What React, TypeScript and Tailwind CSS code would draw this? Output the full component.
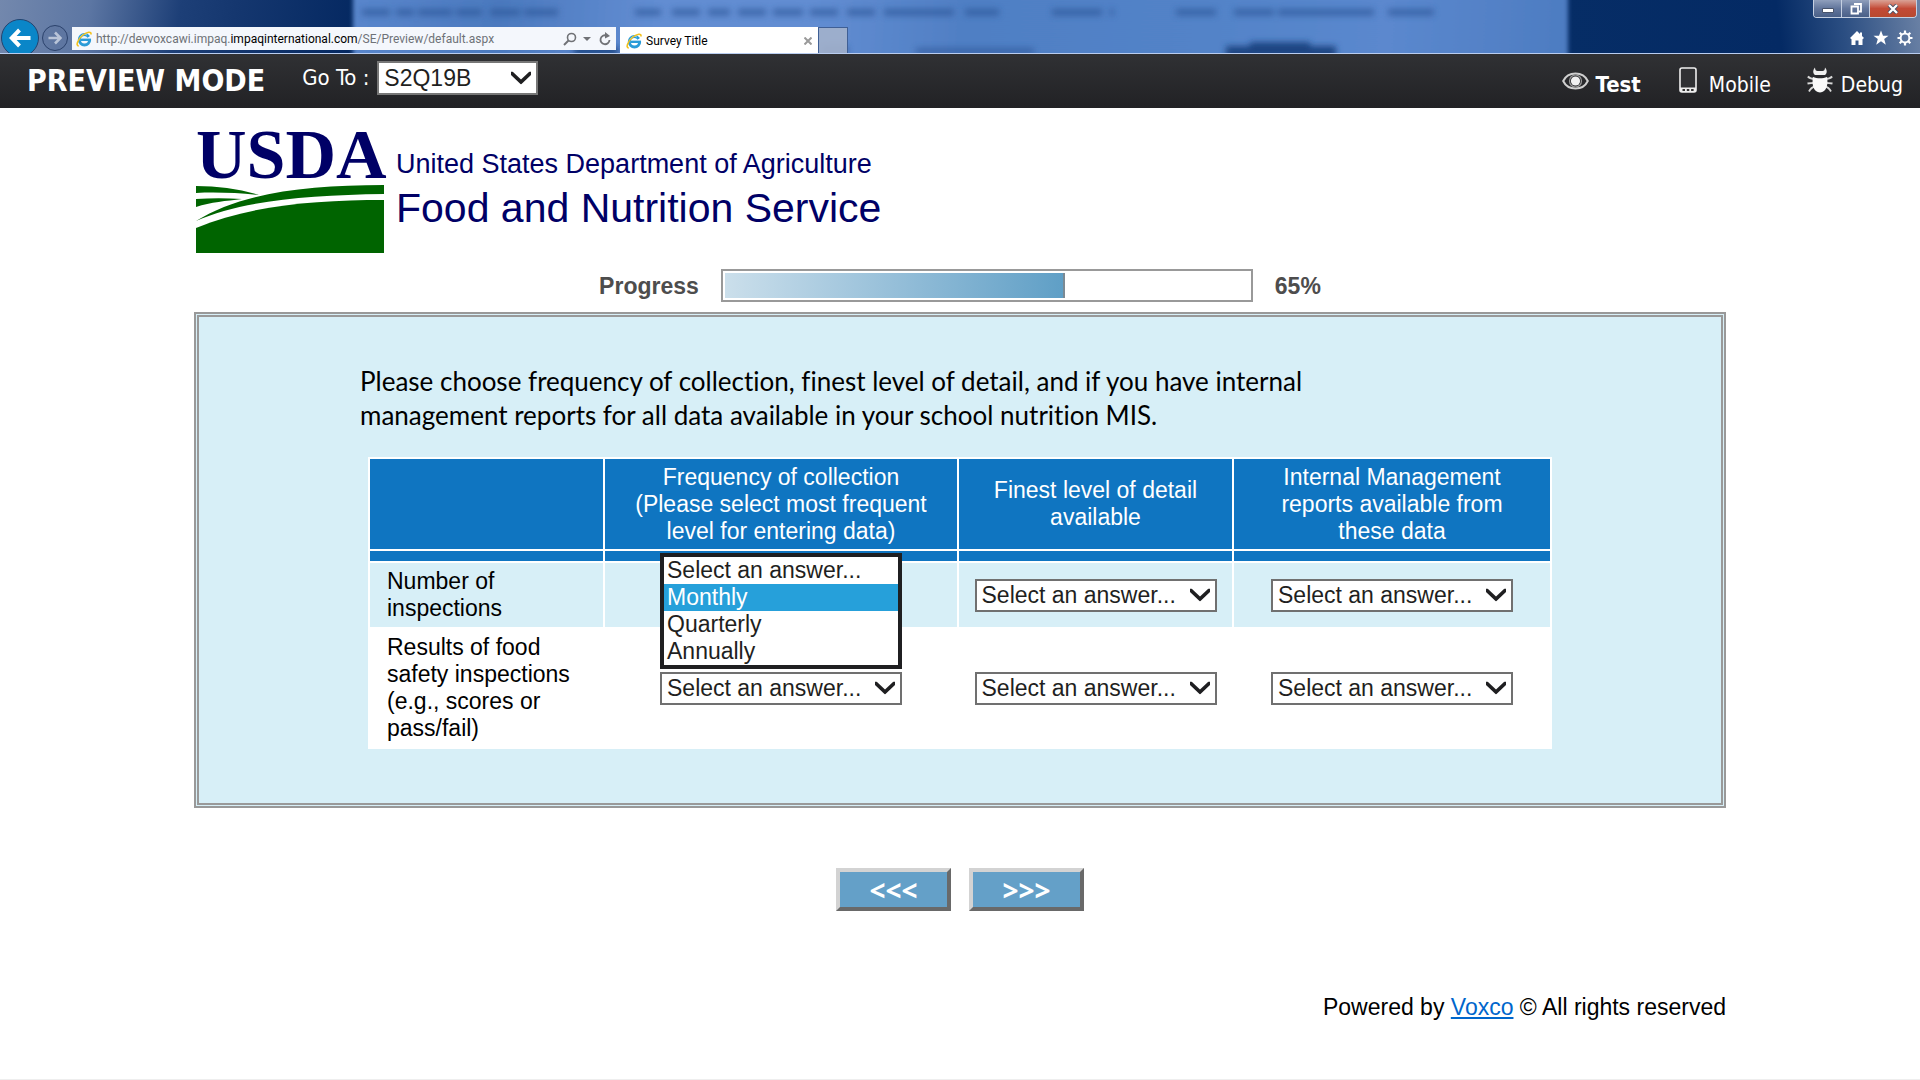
import React from "react";

const SANS = "font-['Liberation_Sans',sans-serif]";
const TAHOMA = "font-['DejaVu_Sans_Condensed','Noto_Sans',sans-serif]";
const CHROME = "font-['Roboto',sans-serif]";

const columns = [
  { id: "frequency", label: "Frequency of collection (Please select most frequent level for entering data)" },
  { id: "detail", label: "Finest level of detail available" },
  { id: "reports", label: "Internal Management reports available from these data" },
];

const rows = [
  { id: "inspections", label: "Number of inspections", open: "frequency" },
  { id: "results", label: "Results of food safety inspections (e.g., scores or pass/fail)", open: null },
];

const answers = ["Select an answer...", "Monthly", "Quarterly", "Annually"];

function IeLogo() {
  return (
    <svg viewBox="0 0 16 16" className="w-4 h-4 shrink-0" aria-hidden="true">
      <circle cx="8.500" cy="8.800" r="5.200" fill="none" stroke="#2a9bd8" strokeWidth="3" strokeDasharray="28.700 4" />
      <path d="M4.500 8.800H15" stroke="#2a9bd8" strokeWidth="2.400" />
      <path d="M4 6.500a5 5 0 0 1 7-2.500" fill="none" stroke="#8fd3f2" strokeWidth="1" />
      <path d="M2.800 15C-.8 14.800 2 8 7 4c4-3.200 8.500-4 8-.5" fill="none" stroke="#f3c11b" strokeWidth="1.600" />
    </svg>
  );
}

function Chevron() {
  return (
    <svg
      viewBox="0 0 20 13"
      className="absolute right-[7px] top-1/2 -translate-y-1/2 w-5 h-[13px] pointer-events-none"
      aria-hidden="true"
    >
      <path d="M0 0h1.500L10 8 18.500 0H20v3.500L10 13 0 3.500z" fill="#1f1f21" />
    </svg>
  );
}

// blurred window contents that show through the glass frame
const ghostText = [
  [362, 28], [396, 18], [418, 34], [456, 26], [490, 30], [524, 34],
  [635, 26], [672, 28], [708, 22], [738, 28], [773, 30], [810, 28], [847, 28], [884, 70], [965, 34],
  [1052, 50], [1110, 4], [1176, 40], [1234, 40], [1278, 96], [1388, 46],
];

function GlassBackdrop() {
  return (
    <svg
      className="absolute inset-0 w-full h-full"
      viewBox="0 0 1920 54"
      preserveAspectRatio="none"
      aria-hidden="true"
    >
      <defs>
        <linearGradient id="glassLeft" gradientUnits="userSpaceOnUse" x1="0" y1="0" x2="354" y2="60">
          <stop offset="0" stopColor="#7388ad" />
          <stop offset="0.25" stopColor="#5c76a3" />
          <stop offset="0.5" stopColor="#1d3f77" />
          <stop offset="0.65" stopColor="#15376f" />
          <stop offset="1" stopColor="#042861" />
        </linearGradient>
        <linearGradient id="glassMid" gradientUnits="userSpaceOnUse" x1="353" y1="0" x2="1568" y2="60">
          <stop offset="0" stopColor="#5986cc" />
          <stop offset="0.12" stopColor="#4b79be" />
          <stop offset="0.25" stopColor="#628dd2" />
          <stop offset="0.38" stopColor="#628dd2" />
          <stop offset="0.5" stopColor="#507fc4" />
          <stop offset="0.7" stopColor="#5283c8" />
          <stop offset="0.85" stopColor="#5b88ce" />
          <stop offset="1" stopColor="#4d7cc1" />
        </linearGradient>
        <linearGradient id="glassRight" gradientUnits="userSpaceOnUse" x1="1568" y1="54" x2="1920" y2="10">
          <stop offset="0" stopColor="#062d66" />
          <stop offset="0.6" stopColor="#042a64" />
          <stop offset="0.78" stopColor="#2b4e82" />
          <stop offset="1" stopColor="#6a81a5" />
        </linearGradient>
        <filter id="soft" x="-20%" y="-100%" width="140%" height="300%">
          <feGaussianBlur stdDeviation="3" />
        </filter>
        <filter id="edge">
          <feGaussianBlur stdDeviation="2 0" />
        </filter>
      </defs>
      <rect width="960" height="54" fill="url(#glassLeft)" />
      <rect x="1560" width="360" height="54" fill="url(#glassRight)" />
      <rect x="353" y="-10" width="1215" height="74" fill="url(#glassMid)" filter="url(#edge)" />
      <g filter="url(#soft)" fill="#2c5596" opacity="0.65">
        {ghostText.map(([x, w]) => (
          <rect key={x} x={x} y="9" width={w} height="7" />
        ))}
        <rect x="822" y="47" width="26" height="8" />
        <rect x="916" y="49" width="118" height="6" />
      </g>
      <g filter="url(#soft)" fill="#1a4482">
        <rect x="574" y="48" width="44" height="8" />
        <rect x="1226" y="47" width="110" height="12" />
        <rect x="1250" y="43" width="60" height="6" />
      </g>
    </svg>
  );
}

function BrowserChrome() {
  return (
    <header className={`relative h-[54px] border-b border-[#b9cdf0] overflow-hidden ${CHROME}`}>
      <GlassBackdrop />
      <div className="relative flex h-full items-start">
        <div className="flex h-full items-start pt-[19px] pl-px">
          <button
            aria-label="Back"
            className="w-[38px] h-[38px] shrink-0 rounded-full bg-[#0a86c8] border border-[#24436f] flex items-center justify-center"
          >
            <svg viewBox="0 0 22 20" className="w-[22px] h-5" aria-hidden="true">
              <path d="M10.500 2 2.800 10l7.700 8M3 10h18.500" fill="none" stroke="#fff" strokeWidth="4" />
            </svg>
          </button>
          <button
            aria-label="Forward"
            className="mt-1.5 ml-[3px] w-[26px] h-[26px] shrink-0 rounded-full bg-[#5a719b]/40 border border-[#2b426c] flex items-center justify-center"
          >
            <svg viewBox="0 0 14 14" className="w-3.5 h-3.5" aria-hidden="true">
              <path d="M7 1.500 12.500 7 7 12.500M12 7H.5" fill="none" stroke="#b9c4d8" strokeWidth="2.600" />
            </svg>
          </button>
        </div>

        <div className="mt-[27px] ml-1 w-[544px] h-[23px] bg-[#f4f7fc] flex items-center pl-1 pr-[5px]">
          <IeLogo />
          <div role="textbox" aria-label="Address" className="ml-1 flex-1 text-xs text-[#6e7277] whitespace-nowrap">
            http://devvoxcawi.impaq.<span className="text-black">impaqinternational.com</span>
            /SE/Preview/default.aspx
          </div>
          <button aria-label="Search">
            <svg viewBox="0 0 14 14" className="w-3.5 h-3.5" aria-hidden="true">
              <path d="M5.500 8.500 1 13" stroke="#707276" strokeWidth="2" />
              <circle cx="8.500" cy="5.500" r="4" fill="none" stroke="#707276" strokeWidth="1.600" />
            </svg>
          </button>
          <svg viewBox="0 0 8 4" className="ml-1.5 w-2 h-1" aria-hidden="true">
            <path d="M0 0h8L4 4z" fill="#707276" />
          </svg>
          <button aria-label="Refresh" className="ml-2">
            <svg viewBox="0 0 12 14" className="w-3 h-3.5" aria-hidden="true">
              <path d="M10.500 8a4.500 4.500 0 1 1-3-4.500" fill="none" stroke="#707276" strokeWidth="1.800" />
              <path d="M6 0v6.500L11 4z" fill="#707276" />
            </svg>
          </button>
        </div>

        <div className="mt-[27px] ml-1 w-[199px] h-[27px] bg-white border-r border-[#3f5f95] flex items-center pl-1.5 pr-1.5">
          <IeLogo />
          <span className="ml-1 flex-1 text-xs text-black">Survey Title</span>
          <button aria-label="Close tab">
            <svg viewBox="0 0 8 8" className="w-2 h-2" aria-hidden="true">
              <path d="m.5.5 7 7m0-7-7 7" stroke="#9a9a9a" strokeWidth="2" />
            </svg>
          </button>
        </div>
        <button
          aria-label="New tab"
          className="mt-[27px] w-[29px] h-[27px] bg-[#a3b1cb]/90 border-r border-t border-[#3f5f95]"
        />

        <div className="ml-auto flex flex-col items-end pr-[3px]">
          <div className="flex w-[104px] h-[18px] rounded-b-[4px] border border-t-0 border-[#c5d0e2] overflow-hidden">
            <button
              aria-label="Minimize"
              className="w-7 flex items-center justify-center bg-linear-to-b from-[#8f9fbc] via-[#62769c] to-[#4a6088] border-r border-[#c5d0e2]"
            >
              <svg viewBox="0 0 12 5" className="w-3 h-[5px] mt-1" aria-hidden="true">
                <path d="M.5.5h11v4H.5z" fill="#fff" stroke="#47536b" />
              </svg>
            </button>
            <button
              aria-label="Restore"
              className="w-7 flex items-center justify-center bg-linear-to-b from-[#8f9fbc] via-[#62769c] to-[#4a6088] border-r border-[#c5d0e2]"
            >
              <svg viewBox="0 0 12 12" className="w-3 h-3" aria-hidden="true">
                <path d="M4 1h7v7.500H9M1.500 3.500h6.500v7H1.500z" fill="none" stroke="#fff" strokeWidth="1.800" />
              </svg>
            </button>
            <button
              aria-label="Close"
              className="flex-1 flex items-center justify-center bg-linear-to-b from-[#d9a296] via-[#c34a36] to-[#b8492f]"
            >
              <svg viewBox="0 0 12 10" className="w-3 h-2.5" aria-hidden="true">
                <path d="m2 1 8 8m0-8L2 9" stroke="#444f66" strokeWidth="4" />
                <path d="m2 1 8 8m0-8L2 9" stroke="#fff" strokeWidth="2.400" />
              </svg>
            </button>
          </div>
          <div className="flex gap-2 mt-3 pr-1 text-white">
            <button aria-label="Home">
              <svg viewBox="0 0 16 16" className="w-4 h-4" aria-hidden="true">
                <path d="M8 1 1 8l1.500 1.300V15h4v-4.500h3V15h4V9.300L15 8l-2-2V2.500h-2V4z" fill="#fff" />
              </svg>
            </button>
            <button aria-label="Favorites">
              <svg viewBox="0 0 16 16" className="w-4 h-4" aria-hidden="true">
                <path d="m8 .5 2 5.300h5.500L11.200 9l1.600 5.700L8 11.300l-4.800 3.400L4.800 9 .5 5.800H6z" fill="#fff" />
              </svg>
            </button>
            <button aria-label="Tools">
              <svg viewBox="0 0 16 16" className="w-4 h-4" aria-hidden="true">
                <circle cx="8" cy="8" r="4.400" fill="none" stroke="#fff" strokeWidth="2" />
                <path
                  d="M8 .5v3M8 12.500v3M.5 8h3M12.500 8h3M2.700 2.700l2 2M11.300 11.300l2 2M13.300 2.700l-2 2M4.700 11.300l-2 2"
                  stroke="#fff"
                  strokeWidth="2.200"
                />
              </svg>
            </button>
          </div>
        </div>
      </div>
    </header>
  );
}

function PreviewBar() {
  return (
    <div className={`h-[54px] flex items-center bg-linear-to-b from-[#303134] to-[#222225] text-white pl-[27px] pr-[17px] ${TAHOMA}`}>
      <h1 className="text-[30px] leading-[54px] font-bold whitespace-nowrap">PREVIEW MODE</h1>
      <label htmlFor="goto" className="ml-[37px] mb-1.5 text-[22px] leading-8 whitespace-nowrap">Go To :</label>
      <div className={`relative ml-2 mb-1.5 ${SANS}`}>
        <select
          id="goto"
          className="appearance-none block w-[161px] h-[34px] bg-white border-2 border-[#777] pl-[5px] text-[23px] leading-7 text-[#1f1f21]"
        >
          <option>S2Q19B</option>
        </select>
        <Chevron />
      </div>

      <nav className="ml-auto flex items-center text-[21px] leading-8">
        <a href="#test" className="flex items-center text-[22px] font-bold">
          <svg viewBox="0 0 27 18" className="w-[27px] h-[18px] mr-[7px]" aria-hidden="true">
            <path d="M1.200 9C6-1 21-1 25.800 9 21 19 6 19 1.200 9z" fill="none" stroke="#cfcfcf" strokeWidth="2" />
            <circle cx="13.500" cy="9" r="6" fill="none" stroke="#9a9a9a" strokeWidth="1.200" />
            <circle cx="13.500" cy="9" r="4.600" fill="#f0f0f0" />
          </svg>
          <span className="pt-2">Test</span>
        </a>
        <a href="#mobile" className="flex items-center ml-[38px]">
          <svg viewBox="0 0 18 26" className="w-[18px] h-[26px] mr-3 mb-0.5" aria-hidden="true">
            <rect x="1" y="1" width="16" height="24" rx="2" fill="#303134" stroke="#eee" strokeWidth="1.600" />
            <path d="M1 20.500h16V25H1z" fill="#eee" />
            <path d="M3.500 23h2.500m1.800 0h2.500m1.800 0h2.500" stroke="#333" strokeWidth="2" />
          </svg>
          <span className="pt-2">Mobile</span>
        </a>
        <a href="#debug" className="flex items-center ml-9">
          <svg viewBox="0 0 26 26" className="w-[26px] h-[26px] mr-2 mb-0.5" aria-hidden="true">
            <g fill="none" stroke="#d8d8d8" strokeWidth="1.800">
              <path d="M.8 9.500c2 2 4 2.500 7 2.500M.5 16.500c3-.6 5-.7 7-.7M2 24.500c1.500-3 3.500-4.500 6-5" />
              <path d="M25.200 9.500c-2 2-4 2.500-7 2.500M25.500 16.500c-3-.6-5-.7-7-.7M24 24.500c-1.500-3-3.500-4.500-6-5" />
            </g>
            <path d="M8 .5c-3 3.500-1.500 6.500 0 7.500h10c1.500-1 3-4 0-7.500 0 2.500-1 3.500-2.500 3.500h-5C9 4 8 3 8 .5z" fill="#f0f0f0" />
            <path d="M6 10c4 1.800 10 1.800 14 0 1.500 7-.5 15.500-7 15.500S4.500 17 6 10z" fill="#fafafa" />
          </svg>
          <span className="pt-2">Debug</span>
        </a>
      </nav>
    </div>
  );
}

function UsdaLogo() {
  return (
    <div className="flex pt-3 pl-0.5 text-[#000066]">
      <div className="w-[188px]">
        <div className="h-[65px] font-['Liberation_Serif',serif] font-bold text-[70px] leading-[69px]">USDA</div>
        <svg viewBox="0 0 188 68" className="block w-[188px] h-[68px]" aria-hidden="true">
          <path d="M0 1c22 0 44 3 63 9-20-2-42-3-63-2z" fill="#006400" />
          <path d="M0 14c15-1 30-1 46 0-16 2-31 3-46 8z" fill="#006400" />
          <path d="M0 36C45 8 110 0 188 0v9C110 10 45 16 0 36z" fill="#006400" />
          <path d="M0 43C55 20 120 15 188 15v53H0z" fill="#006400" />
        </svg>
      </div>
      <div className={`ml-3 mt-6 ${SANS}`}>
        <p className="text-[27px] leading-10">United States Department of Agriculture</p>
        <p className="text-[41px] leading-[48px]">Food and Nutrition Service</p>
      </div>
    </div>
  );
}

function Progress({ percent }: { percent: number }) {
  return (
    <div className="mt-4 flex items-center justify-center text-[23px] leading-8 font-bold text-[#4d4d4d]">
      <span id="progress-label">Progress</span>
      <div
        role="progressbar"
        aria-labelledby="progress-label"
        aria-valuenow={percent}
        className="mx-[22px] w-[532px] h-[33px] border-2 border-[#999] p-0.5 bg-white"
      >
        <div
          className="h-full bg-linear-to-r from-[#cbdfeb] to-[#5f9fc6] border-r-2 border-[#7b8a94]"
          style={{ width: `${percent}%` }}
        />
      </div>
      <span>{percent}%</span>
    </div>
  );
}

function AnswerSelect({ id, label, open }: { id: string; label: string; open: boolean }) {
  return (
    <div className="relative w-[242px] mx-auto text-left text-[#1f1f21]">
      <select
        id={id}
        aria-label={label}
        className="appearance-none block w-full h-[33px] bg-white border-2 border-[#707070] pl-[5px] text-[23px] leading-7"
      >
        {answers.map((a) => (
          <option key={a}>{a}</option>
        ))}
      </select>
      <Chevron />
      {open && (
        <ul role="listbox" className="absolute z-10 left-0 -top-[26px] w-full border-4 border-[#1f1f21] bg-white">
          {answers.map((a) => (
            <li
              key={a}
              role="option"
              aria-selected={a === "Monthly"}
              className={`pl-[3px] leading-[27px] ${a === "Monthly" ? "bg-[#26a0da] text-white" : ""}`}
            >
              {a}
            </li>
          ))}
        </ul>
      )}
    </div>
  );
}

function SurveyTable() {
  return (
    <table className="mt-[25px] ml-2 w-[1184px] table-fixed border-separate border-spacing-0.5 bg-white text-[23px] leading-[27px]">
      <colgroup>
        <col className="w-[233px]" />
        <col className="w-[352px]" />
        <col className="w-[273px]" />
        <col />
      </colgroup>
      <thead>
        <tr className="bg-[#0f75c1] text-white">
          <td className="h-[90px]" />
          {columns.map((c) => (
            <th key={c.id} scope="col" className="h-[90px] px-6 py-1 font-normal">{c.label}</th>
          ))}
        </tr>
        <tr className="bg-[#0f75c1]" aria-hidden="true">
          <td className="h-2.5" />
          <td />
          <td />
          <td />
        </tr>
      </thead>
      <tbody>
        {rows.map((r, i) => (
          <tr key={r.id} className={i % 2 === 0 ? "bg-[#d7eff7]" : "bg-white"}>
            <th scope="row" className="pl-[17px] pr-6 py-[5px] text-left font-normal">{r.label}</th>
            {columns.map((c) => (
              <td key={c.id}>
                <AnswerSelect id={`${r.id}-${c.id}`} label={`${r.label}: ${c.label}`} open={r.open === c.id} />
              </td>
            ))}
          </tr>
        ))}
      </tbody>
    </table>
  );
}

export default function App() {
  return (
    <div className={`min-h-screen flex flex-col bg-white text-black border-b border-[#eee] ${SANS}`}>
      <BrowserChrome />
      <PreviewBar />

      <main className="w-full max-w-[1532px] mx-auto">
        <UsdaLogo />
        <Progress percent={65} />

        <section className="mt-2.5 border-[5px] border-double border-[#999] bg-[#d7eff7] pt-[47px] pb-[54px] pl-[161px] pr-40">
          <p className="max-w-[1000px] font-['Lato',sans-serif] text-[26px] leading-[34px] [font-variant-ligatures:none]">
            Please choose frequency of collection, finest level of detail, and if you have internal
            management reports for all data available in your school nutrition MIS.
          </p>
          <SurveyTable />
        </section>

        <div className="mt-[60px] flex justify-center gap-[18px] font-['Noto_Sans',sans-serif] font-bold text-[28px] leading-none text-white">
          <button
            aria-label="Previous"
            className="w-[115px] h-[43px] bg-[#64a0c8] border-4 border-t-[#d3d3d3] border-l-[#d3d3d3] border-r-[#696969] border-b-[#696969] flex items-center justify-center"
          >
            &lt;&lt;&lt;
          </button>
          <button
            aria-label="Next"
            className="w-[115px] h-[43px] bg-[#64a0c8] border-4 border-t-[#d3d3d3] border-l-[#d3d3d3] border-r-[#696969] border-b-[#696969] flex items-center justify-center"
          >
            &gt;&gt;&gt;
          </button>
        </div>

        <footer className="mt-20 text-right text-[23px] leading-8">
          Powered by <a href="#voxco" className="text-[#0066cc] underline">Voxco</a> © All rights reserved
        </footer>
      </main>
    </div>
  );
}
